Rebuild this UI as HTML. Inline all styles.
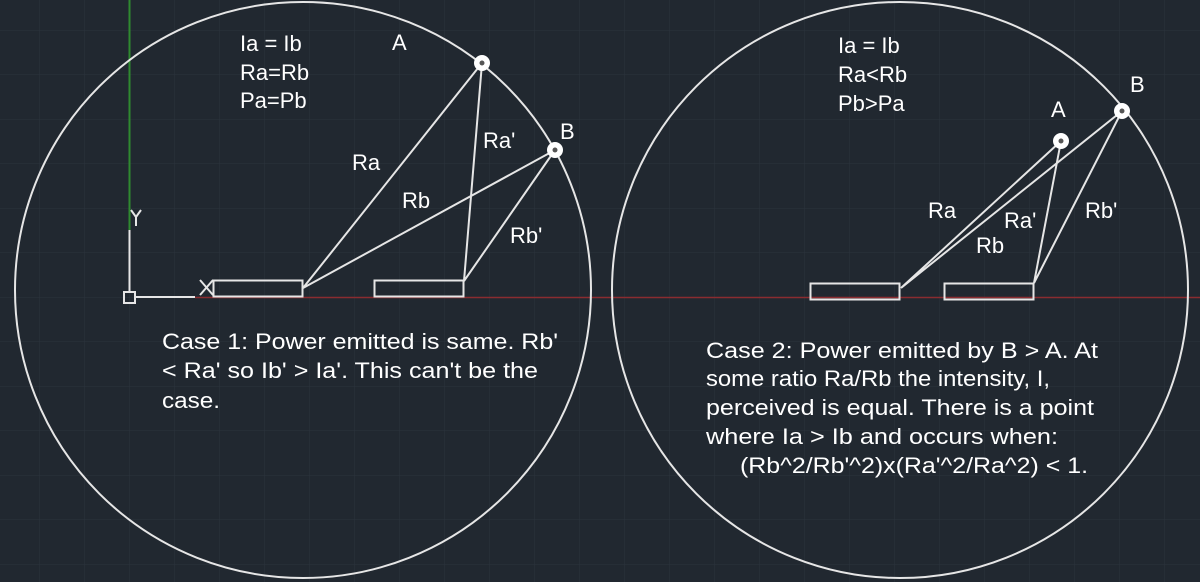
<!DOCTYPE html>
<html><head><meta charset="utf-8"><style>
html,body{margin:0;padding:0;background:#212830;}
svg{display:block}
text{font-family:"Liberation Sans",sans-serif;fill:#fff;font-size:22px}
</style></head><body>
<svg width="1200" height="582" viewBox="0 0 1200 582">
<defs>
<pattern id="g" x="-6" y="30" width="45" height="44.5" patternUnits="userSpaceOnUse">
<path d="M0 0V44.5M0 0H45" stroke="#2c333d" stroke-width="1" fill="none"/>
</pattern>
</defs>
<rect width="1200" height="582" fill="#212830"/>
<rect width="1200" height="582" fill="url(#g)"/>
<line x1="195" y1="297.5" x2="1200" y2="297.5" stroke="#8a2c30" stroke-width="1.6"/>
<line x1="129.5" y1="0" x2="129.5" y2="230" stroke="#2f8a2f" stroke-width="2"/>
<g stroke="#e6e6e6" stroke-width="2" fill="none">
<line x1="129.5" y1="230" x2="129.5" y2="292"/>
<line x1="134" y1="297" x2="195" y2="297"/>
<rect x="124" y="292" width="11" height="11"/>
<path d="M131 210l5 7 5-7M136 217v9"/>
<path d="M200 280l13 15M213 280l-13 15"/>
<circle cx="303" cy="290" r="288"/>
<circle cx="900" cy="290" r="288"/>
<rect x="213.5" y="280.5" width="89" height="16"/>
<rect x="374.5" y="280.5" width="89" height="16"/>
<rect x="810.5" y="283.5" width="89" height="16"/>
<rect x="944.5" y="283.5" width="89" height="16"/>
<path d="M303 288L482 63M303 288L555 150M464 281L482 63M464 281L555 150"/>
<path d="M901 288L1061 141M901 288L1122 111M1034 283L1061 141M1034 283L1122 111"/>
</g>
<g fill="#fff">
<circle cx="482" cy="63" r="8"/><circle cx="555" cy="150" r="8"/>
<circle cx="1061" cy="141" r="8"/><circle cx="1122" cy="111" r="8"/>
</g>
<g fill="#555">
<circle cx="482" cy="63" r="2.5"/><circle cx="555" cy="150" r="2.5"/>
<circle cx="1061" cy="141" r="2.5"/><circle cx="1122" cy="111" r="2.5"/>
</g>
<text x="240" y="51">Ia = Ib</text>
<text x="240" y="80">Ra=Rb</text>
<text x="240" y="108">Pa=Pb</text>
<text x="392" y="50">A</text>
<text x="560" y="139">B</text>
<text x="352" y="170">Ra</text>
<text x="402" y="208">Rb</text>
<text x="483" y="148">Ra'</text>
<text x="510" y="243">Rb'</text>
<text x="838" y="53">Ia = Ib</text>
<text x="838" y="82">Ra&lt;Rb</text>
<text x="838" y="111">Pb&gt;Pa</text>
<text x="1051" y="117">A</text>
<text x="1130" y="92">B</text>
<text x="928" y="218">Ra</text>
<text x="1004" y="228">Ra'</text>
<text x="976" y="253">Rb</text>
<text x="1085" y="218">Rb'</text>
<text x="162" y="349" textLength="396" lengthAdjust="spacingAndGlyphs">Case 1: Power emitted is same. Rb'</text>
<text x="162" y="378" textLength="376" lengthAdjust="spacingAndGlyphs">&lt; Ra' so Ib' &gt; Ia'. This can't be the</text>
<text x="162" y="408" textLength="58" lengthAdjust="spacingAndGlyphs">case.</text>
<text x="706" y="358" textLength="392" lengthAdjust="spacingAndGlyphs">Case 2: Power emitted by B &gt; A. At</text>
<text x="706" y="386" textLength="344" lengthAdjust="spacingAndGlyphs">some ratio Ra/Rb the intensity, I,</text>
<text x="706" y="415" textLength="388" lengthAdjust="spacingAndGlyphs">perceived is equal. There is a point</text>
<text x="706" y="444" textLength="352" lengthAdjust="spacingAndGlyphs">where Ia &gt; Ib and occurs when:</text>
<text x="740" y="473" textLength="348" lengthAdjust="spacingAndGlyphs">(Rb^2/Rb'^2)x(Ra'^2/Ra^2) &lt; 1.</text>
</svg>
</body></html>
